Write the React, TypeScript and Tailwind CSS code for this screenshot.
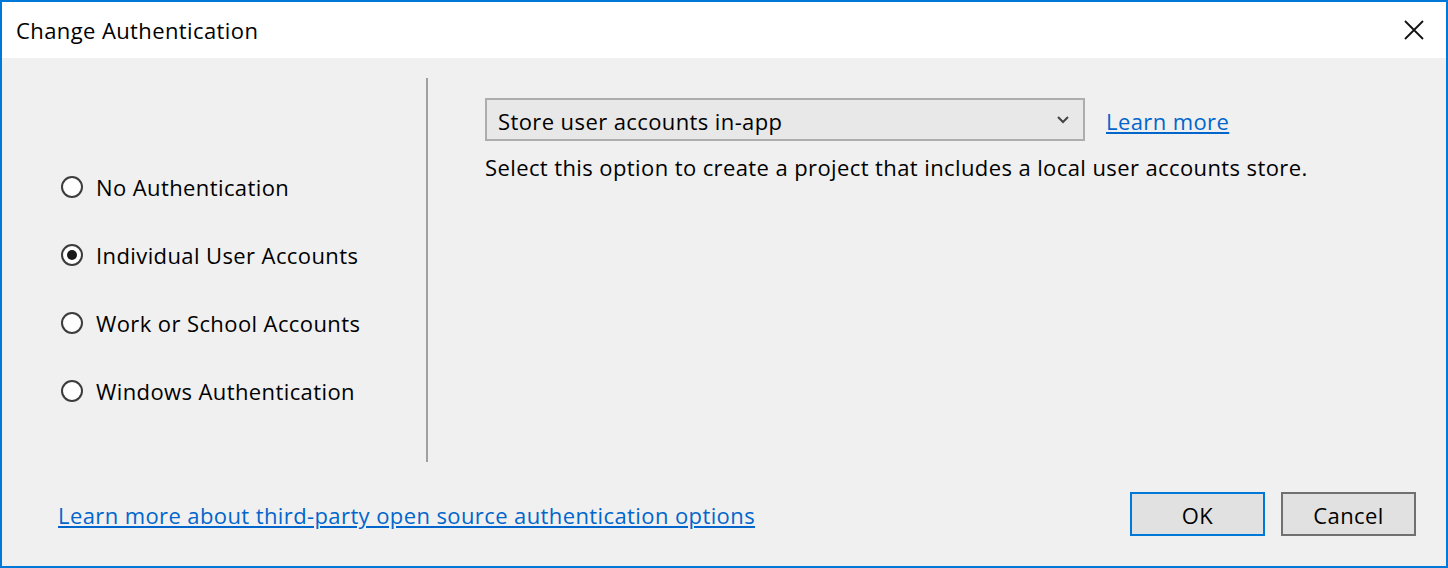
import React from "react";

function Radio({ checked, label }: { checked?: boolean; label: string }) {
  return (
    <div className="flex items-center h-[28px]">
      <div className="w-[22px] h-[22px] rounded-full border-2 border-[#3c3c3c] bg-white flex items-center justify-center">
        {checked && <div className="w-[10px] h-[10px] rounded-full bg-[#1a1a1a]" />}
      </div>
      <span className="ml-[13px] text-[22px] tracking-[0.4px] text-black">{label}</span>
    </div>
  );
}

export default function App() {
  return (
    <div
      className="w-[1448px] h-[568px] border-2 border-[#0078d7] bg-[#f0f0f0] flex flex-col overflow-hidden"
      style={{ fontFamily: '"Open Sans", "Noto Sans", sans-serif' }}
    >
      <div className="h-[56px] bg-white flex items-center justify-between pl-[14px] pr-[22px] shrink-0">
        <span className="text-[22px] tracking-[0.4px] text-black">Change Authentication</span>
        <svg width="20" height="20" viewBox="0 0 20 20">
          <path d="M1 1 L19 19 M19 1 L1 19" stroke="#111" strokeWidth="1.8" />
        </svg>
      </div>
      <div className="flex flex-1 pt-[20px]">
        <div className="w-[426px] h-[384px] border-r-2 border-[#a0a0a0] flex flex-col gap-[40px] pl-[59px] pt-[95px]">
          <Radio label="No Authentication" />
          <Radio checked label="Individual User Accounts" />
          <Radio label="Work or School Accounts" />
          <Radio label="Windows Authentication" />
        </div>
        <div className="pl-[57px] pt-[20px] flex flex-col">
          <div className="flex items-center">
            <div className="w-[600px] h-[43px] border-2 border-[#adadad] bg-[#e8e8e8] flex items-center justify-between pl-[11px] pr-[14px]">
              <span className="text-[22px] tracking-[0.4px] text-black pt-[3px]">Store user accounts in-app</span>
              <svg width="12" height="8" viewBox="0 0 12 8">
                <path d="M1 1 L6 6 L11 1" stroke="#444" strokeWidth="2" fill="none" />
              </svg>
            </div>
            <a className="ml-[21px] text-[22px] tracking-[0.4px] text-[#0066cc] underline pt-[3px]">Learn more</a>
          </div>
          <div className="mt-[10px] text-[22px] tracking-[0.4px] text-black">
            Select this option to create a project that includes a local user accounts store.
          </div>
        </div>
      </div>
      <div className="flex items-center justify-between pl-[56px] pr-[30px] pb-[30px]">
        <a className="text-[22px] tracking-[0.4px] text-[#0066cc] underline pt-[3px]">Learn more about third-party open source authentication options</a>
        <div className="flex gap-[16px]">
          <button className="w-[135px] h-[44px] border-2 border-[#0078d7] bg-[#e1e1e1] text-[22px] tracking-[0.4px] text-black pt-[2px]">OK</button>
          <button className="w-[135px] h-[44px] border-2 border-[#707070] bg-[#e1e1e1] text-[22px] tracking-[0.4px] text-black pt-[2px]">Cancel</button>
        </div>
      </div>
    </div>
  );
}
